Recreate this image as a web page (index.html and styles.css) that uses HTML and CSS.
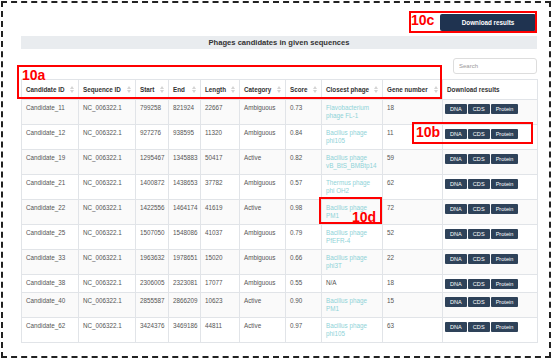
FILE: index.html
```html
<!DOCTYPE html>
<html lang="en">
<head>
    <meta charset="UTF-8">
    <meta name="viewport" content="width=device-width, initial-scale=1.0">
    <title>Phages candidates</title>
    <link rel="stylesheet" href="styles.css">
</head>
<body>
    <div class="frame">
        <div class="toolbar">
            <button class="btn-download">Download results</button>
        </div>
        <h2 class="panel-title">Phages candidates in given sequences</h2>
        <div class="search-row">
            <input type="text" class="search" placeholder="Search">
        </div>

        <table class="results">
            <colgroup>
                <col style="width: 57px">
                <col style="width: 57px">
                <col style="width: 33px">
                <col style="width: 32px">
                <col style="width: 39px">
                <col style="width: 46px">
                <col style="width: 36px">
                <col style="width: 61px">
                <col style="width: 60px">
                <col style="width: 95px">
            </colgroup>
            <thead>
                <tr>
                    <th><div class="th-inner">Candidate ID<span class="sort"></span></div></th>
                    <th><div class="th-inner">Sequence ID<span class="sort"></span></div></th>
                    <th><div class="th-inner">Start<span class="sort"></span></div></th>
                    <th><div class="th-inner">End<span class="sort"></span></div></th>
                    <th><div class="th-inner">Length<span class="sort"></span></div></th>
                    <th><div class="th-inner">Category<span class="sort"></span></div></th>
                    <th><div class="th-inner">Score<span class="sort"></span></div></th>
                    <th><div class="th-inner">Closest phage<span class="sort"></span></div></th>
                    <th><div class="th-inner">Gene number<span class="sort"></span></div></th>
                    <th><div class="th-inner">Download results</div></th>
                </tr>
            </thead>
            <tbody>
                <tr>
                    <td>Candidate_11</td><td>NC_006322.1</td><td>799258</td><td>821924</td><td>22667</td><td>Ambiguous</td><td>0.73</td>
                    <td><a href="#">Flavobacterium phage FL-1</a></td><td>18</td>
                    <td class="dl"><button>DNA</button><button>CDS</button><button>Protein</button></td>
                </tr>
                <tr>
                    <td>Candidate_12</td><td>NC_006322.1</td><td>927276</td><td>938595</td><td>11320</td><td>Ambiguous</td><td>0.84</td>
                    <td><a href="#">Bacillus phage phi105</a></td><td>11</td>
                    <td class="dl"><button>DNA</button><button>CDS</button><button>Protein</button></td>
                </tr>
                <tr>
                    <td>Candidate_19</td><td>NC_006322.1</td><td>1295467</td><td>1345883</td><td>50417</td><td>Active</td><td>0.82</td>
                    <td><a href="#">Bacillus phage vB_BtS_BMBtp14</a></td><td>59</td>
                    <td class="dl"><button>DNA</button><button>CDS</button><button>Protein</button></td>
                </tr>
                <tr>
                    <td>Candidate_21</td><td>NC_006322.1</td><td>1400872</td><td>1438653</td><td>37782</td><td>Ambiguous</td><td>0.57</td>
                    <td><a href="#">Thermus phage phi OH2</a></td><td>62</td>
                    <td class="dl"><button>DNA</button><button>CDS</button><button>Protein</button></td>
                </tr>
                <tr>
                    <td>Candidate_22</td><td>NC_006322.1</td><td>1422556</td><td>1464174</td><td>41619</td><td>Active</td><td>0.98</td>
                    <td><a href="#">Bacillus phage PM1</a></td><td>72</td>
                    <td class="dl"><button>DNA</button><button>CDS</button><button>Protein</button></td>
                </tr>
                <tr>
                    <td>Candidate_25</td><td>NC_006322.1</td><td>1507050</td><td>1548086</td><td>41037</td><td>Ambiguous</td><td>0.79</td>
                    <td><a href="#">Bacillus phage PfEFR-4</a></td><td>52</td>
                    <td class="dl"><button>DNA</button><button>CDS</button><button>Protein</button></td>
                </tr>
                <tr>
                    <td>Candidate_33</td><td>NC_006322.1</td><td>1963632</td><td>1978651</td><td>15020</td><td>Ambiguous</td><td>0.66</td>
                    <td><a href="#">Bacillus phage phi3T</a></td><td>22</td>
                    <td class="dl"><button>DNA</button><button>CDS</button><button>Protein</button></td>
                </tr>
                <tr>
                    <td>Candidate_38</td><td>NC_006322.1</td><td>2306005</td><td>2323081</td><td>17077</td><td>Ambiguous</td><td>0.55</td>
                    <td>N/A</td><td>18</td>
                    <td class="dl"><button>DNA</button><button>CDS</button><button>Protein</button></td>
                </tr>
                <tr>
                    <td>Candidate_40</td><td>NC_006322.1</td><td>2855587</td><td>2866209</td><td>10623</td><td>Active</td><td>0.90</td>
                    <td><a href="#">Bacillus phage PM1</a></td><td>15</td>
                    <td class="dl"><button>DNA</button><button>CDS</button><button>Protein</button></td>
                </tr>
                <tr>
                    <td>Candidate_62</td><td>NC_006322.1</td><td>3424376</td><td>3469186</td><td>44811</td><td>Active</td><td>0.97</td>
                    <td><a href="#">Bacillus phage phi105</a></td><td>63</td>
                    <td class="dl"><button>DNA</button><button>CDS</button><button>Protein</button></td>
                </tr>
            </tbody>
        </table>

        <!-- figure callouts -->
        <div class="mark mark-a"><span class="mark-label">10a</span></div>
        <div class="mark mark-b"><span class="mark-label">10b</span></div>
        <div class="mark mark-c"><span class="mark-label">10c</span></div>
        <div class="mark mark-d"><span class="mark-label">10d</span></div>
    </div>
</body>
</html>
```

FILE: styles.css
```css
* {
    box-sizing: border-box;
}
body {
    margin: 0;
    font-family: 'Liberation Sans', Arial, sans-serif;
    background: #fff;
    color: #555;
}
.frame {
    position: relative;
    width: 550px;
    height: 357px;
    margin: 1px;
    border: 2px dashed #222;
    padding: 11px 12px 0 18px;
}
.toolbar {
    display: flex;
    justify-content: flex-end;
}
.btn-download {
    width: 96px;
    height: 17px;
    margin-right: 1px;
    background-color: #1f3350;
    color: #fff;
    border: none;
    border-radius: 2px;
    font-family: inherit;
    font-size: 6.3px;
    font-weight: 700;
}
.panel-title {
    margin: 5px 0 0;
    height: 13px;
    line-height: 13px;
    background-color: #e9ecef;
    text-align: center;
    font-size: 7.6px;
    font-weight: 700;
    color: #333;
}
.search-row {
    display: flex;
    justify-content: flex-end;
    margin-top: 9px;
}
.search {
    width: 84px;
    height: 16px;
    border: 1px solid #ddd;
    border-radius: 3px;
    padding: 0 5px;
    font-family: inherit;
    font-size: 6px;
}
.search::placeholder {
    color: #999;
}
.results {
    width: 100%;
    margin-top: 5px;
    border-collapse: collapse;
    table-layout: fixed;
    font-size: 6.3px;
}
.results th,
.results td {
    border: 1px solid #e1e4e8;
    text-align: left;
    vertical-align: top;
}
.results th {
    padding: 5px 4px;
    line-height: 9px;
    font-weight: 700;
    color: #333;
}
.results td {
    padding: 3.5px 4px;
    line-height: 8.5px;
}
.results tbody tr:nth-child(odd) {
    background-color: #fafafa;
}
.th-inner {
    display: flex;
    justify-content: space-between;
    align-items: center;
}
.sort {
    display: flex;
    flex-direction: column;
    gap: 1px;
}
.sort::before,
.sort::after {
    content: "";
    border-left: 2px solid transparent;
    border-right: 2px solid transparent;
}
.sort::before {
    border-bottom: 3px solid #d4d4d4;
}
.sort::after {
    border-top: 3px solid #d4d4d4;
}
.results a {
    color: #8fd3d8;
    text-decoration: none;
}
.results td.dl {
    padding-left: 2px;
    padding-right: 2px;
}
.dl button {
    height: 10px;
    padding: 0 5px;
    margin-right: 1px;
    background-color: #2e4259;
    color: #fff;
    border: none;
    border-radius: 1px;
    font-family: inherit;
    font-size: 5.6px;
    vertical-align: top;
}
.mark {
    position: absolute;
    border: 2px solid #f00;
}
.mark-label {
    position: absolute;
    color: #f00;
    font-size: 14px;
    font-weight: 700;
    line-height: 1;
}
.mark-a {
    left: 14px;
    top: 62px;
    width: 425px;
    height: 34px;
}
.mark-a .mark-label {
    left: 3px;
    top: 1px;
}
.mark-b {
    left: 409px;
    top: 119px;
    width: 121px;
    height: 22px;
}
.mark-b .mark-label {
    left: 2px;
    top: 1px;
}
.mark-c {
    left: 406px;
    top: 8px;
    width: 128px;
    height: 22px;
}
.mark-c .mark-label {
    left: 0;
    top: 0;
}
.mark-d {
    left: 316px;
    top: 194px;
    width: 63px;
    height: 27px;
}
.mark-d .mark-label {
    left: 31px;
    top: 11px;
}
```
